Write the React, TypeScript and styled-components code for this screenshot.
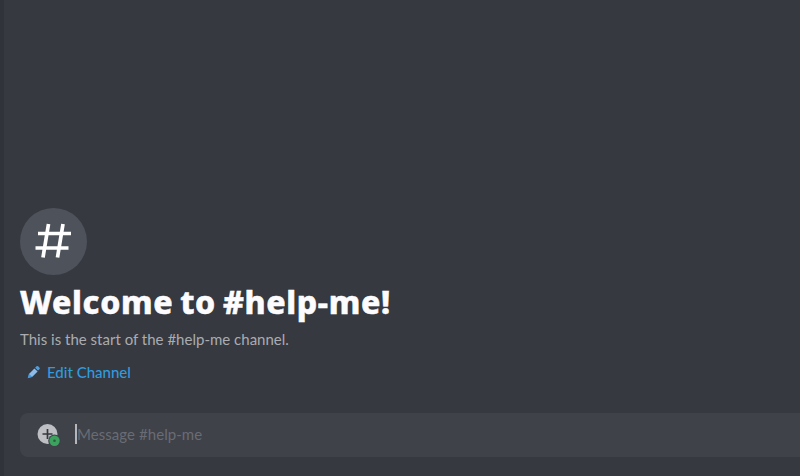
import React from "react";
import styled, { createGlobalStyle } from "styled-components";

const GlobalStyle = createGlobalStyle`
  * { box-sizing: border-box; }
  body { margin: 0; background: #363940; overflow: hidden; }
`;

const Page = styled.div`
  display: flex;
  width: 100vw;
  height: 100vh;
  overflow: hidden;
  font-family: Lato, "Noto Sans", sans-serif;
`;

const SidebarEdge = styled.div`
  flex: 0 0 4px;
  background: #31333a;
`;

const Channel = styled.main`
  flex: 1;
  min-width: 0;
  display: flex;
  flex-direction: column;
  justify-content: flex-end;
  padding: 0 0 19px 16px;
  background: #363940;
`;

const Intro = styled.section`
  display: flex;
  flex-direction: column;
  align-items: flex-start;
`;

const ChannelBadge = styled.div`
  display: flex;
  align-items: center;
  justify-content: center;
  width: 67px;
  height: 67px;
  padding: 0 2px 1px 0;
  border-radius: 50%;
  background: #4e525a;
`;

const Title = styled.h1`
  margin: 6px 0 0;
  height: 42px;
  font-family: "Noto Sans", "Open Sans", sans-serif;
  font-size: 32px;
  line-height: 42px;
  font-weight: 800;
  letter-spacing: 0.65px;
  word-spacing: -2px;
  -webkit-text-stroke: 0.5px #fcfcff;
  white-space: nowrap;
  color: #fcfcff;
`;

const Description = styled.p`
  margin: 6px 0 0;
  height: 20px;
  font-size: 15px;
  line-height: 20px;
  letter-spacing: 0.01px;
  white-space: nowrap;
  color: #aaacb1;
`;

const EditLink = styled.button`
  display: flex;
  align-items: center;
  gap: 7px;
  margin: 13px 0 0 7px;
  padding: 0;
  height: 20px;
  border: 0;
  background: none;
  font: 500 15px/20px Lato, "Noto Sans", sans-serif;
  white-space: nowrap;
  color: #329bde;
`;

const Composer = styled.div`
  display: flex;
  align-items: center;
  height: 44px;
  margin-top: 31px;
  padding-left: 17px;
  border-radius: 8px 0 0 8px;
  background: #3f4249;
`;

const Caret = styled.span`
  width: 2px;
  height: 20px;
  margin: 0 0 2px 14px;
  background: #b4b6bb;
`;

const Placeholder = styled.span`
  margin-bottom: 2px;
  font-size: 15px;
  line-height: 20px;
  letter-spacing: 0.06px;
  white-space: nowrap;
  color: #696c74;
`;

const HashIcon = () => (
  <svg width="38" height="36" viewBox="0 0 38 36" fill="none" stroke="#fff" strokeWidth="3.7">
    <path d="M14.5 1 9 34.5M29 1l-5.5 33.5M4 10.5h33M1.500 25h33" />
  </svg>
);

const PencilIcon = () => (
  <svg width="13" height="14" viewBox="0 0 13 14">
    <path d="M1.500 12.500 2.200 8.800 7.400 3.400 10.600 6.600 5.400 11.800Z" fill="#8cbcec" />
    <path d="m8.100 2.700 1.400-1.400q.8-.7 1.600 0l1.300 1.300q.7.800 0 1.600L11 5.600Z" fill="#4e9fe0" />
    <path d="M.7 13.300 1.900 8.800l3.500 3.300Z" fill="#459ce0" />
  </svg>
);

const AttachIcon = () => (
  <svg width="24" height="24" viewBox="0 0 24 24">
    <circle cx="10.500" cy="11" r="10" fill="#bdbfc5" />
    <path d="M10.500 6v10M5.500 11h10" stroke="#34373d" strokeWidth="1.700" />
    <circle cx="17.500" cy="17.800" r="6.300" fill="#3f4249" />
    <circle cx="17.500" cy="17.800" r="5.200" fill="#3ca25d" />
    <circle cx="17.500" cy="17.800" r="1.300" fill="#2b5d42" />
  </svg>
);

export default function App() {
  return (
    <>
      <GlobalStyle />
      <Page>
        <SidebarEdge />
        <Channel>
          <Intro>
            <ChannelBadge><HashIcon /></ChannelBadge>
            <Title>Welcome to #help-me!</Title>
            <Description>This is the start of the #help-me channel.</Description>
            <EditLink><PencilIcon />Edit Channel</EditLink>
          </Intro>
          <Composer>
            <AttachIcon />
            <Caret />
            <Placeholder>Message #help-me</Placeholder>
          </Composer>
        </Channel>
      </Page>
    </>
  );
}
